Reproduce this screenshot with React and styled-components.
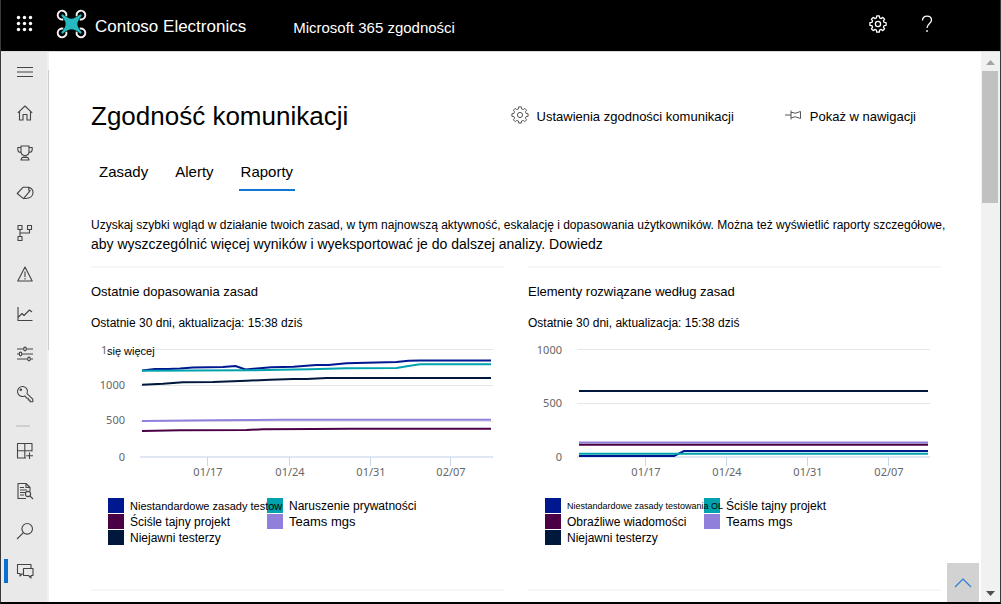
import React from "react";
import styled, { createGlobalStyle } from "styled-components";

const GlobalStyle = createGlobalStyle`
  *, *::before, *::after { box-sizing: border-box; }
  body {
    margin: 0;
    background: #fff;
    color: #000;
    font-family: "Liberation Sans", Arial, sans-serif;
    font-size: 13px;
  }
  button { font: inherit; color: inherit; background: none; border: 0; padding: 0; cursor: pointer; }
  ul { list-style: none; margin: 0; padding: 0; }
  h1, h2, p { margin: 0; font-weight: 400; }
  svg { display: block; }
`;

const Frame = styled.div`
  display: flex;
  flex-direction: column;
  height: 100vh;
  overflow: hidden;
  border: 1px solid #3a3a3a;
  border-top: 0;
  border-bottom: 2px solid #000;
`;

const TopBar = styled.header`
  display: flex;
  align-items: center;
  flex: none;
  height: 52px;
  padding: 0 64px 3px 15px;
  background: #000;
  color: #fff;
  border-bottom: 1px solid #dcdcdc;
`;

const Brand = styled.span`
  margin-left: 8px;
  font-size: 17px;
  line-height: 20px;
  padding-top: 6px;
`;

const Product = styled.span`
  flex: 1;
  margin-left: 47px;
  font-size: 15px;
  line-height: 20px;
  padding-top: 8px;
`;

const BarButton = styled.button`
  display: grid;
  place-items: center;
  width: 18px;
  height: 30px;
  margin-left: ${(p) => p.$gap || 0}px;
`;

const LogoBox = styled.span`
  margin-left: 22px;
`;

const Body = styled.div`
  display: flex;
  flex: 1;
  min-height: 0;
`;

const Rail = styled.nav`
  display: flex;
  flex-direction: column;
  flex: none;
  width: 46px;
  background: #e9e9e9;
`;

const RailButton = styled.button`
  display: flex;
  align-items: center;
  width: 100%;
  height: ${(p) => (p.$tall ? 41 : 40)}px;
  padding-left: ${(p) => (p.$active ? 11 : 15)}px;
  color: #444;
  &::before {
    content: "";
    display: ${(p) => (p.$active ? "block" : "none")};
    width: 4px;
    height: 24px;
    margin: 0 8px 0 -8px;
    background: #0a6fd0;
  }
`;

const RailDivider = styled.hr`
  width: 14px;
  height: 2px;
  margin: 11px 0 4px 15px;
  border: 0;
  background: #cfcfcf;
`;

const RailTrack = styled.div`
  flex: none;
  width: 2px;
  padding-top: 18px;
  background: #f1f1f1;
`;

const RailThumb = styled.div`
  width: 1px;
  height: 280px;
  margin-left: 1px;
  background: #cccccc;
`;

const Main = styled.main`
  position: relative;
  flex: 1;
  min-width: 0;
  overflow: hidden;
  padding: 48px 16px 0 42px;
`;

const TitleRow = styled.div`
  display: flex;
  align-items: center;
  height: 32px;
  padding-right: 49px;
`;

const Title = styled.h1`
  flex: 1;
  font-size: 26px;
  line-height: 32px;
  white-space: nowrap;
`;

const Action = styled.button`
  display: flex;
  align-items: center;
  gap: 8px;
  margin-left: 50px;
  padding-top: 2px;
  font-size: 13px;
  line-height: 18px;
  white-space: nowrap;
  svg { margin-bottom: 5px; color: #555; }
`;

const Tabs = styled.div`
  display: flex;
  gap: 23px;
  margin-top: 30px;
  padding-left: 6px;
`;

const Tab = styled.button`
  padding: 0 2px 7px;
  font-size: 15px;
  line-height: 20px;
  border-bottom: 2px solid ${(p) => (p.$selected ? "#0f78d4" : "transparent")};
`;

const Intro = styled.p`
  margin-top: 25px;
  font-size: 12px;
  line-height: 19px;
  white-space: nowrap;
`;

const IntroRest = styled.span`
  display: block;
  font-size: 14px;
`;

const Cards = styled.div`
  display: grid;
  grid-template-columns: 1fr 1fr;
  column-gap: 24px;
  margin: 12px 24px 0 0;
`;

const Card = styled.section`
  min-width: 0;
  border-top: 2px solid #f6f6f6;
  padding: 15px 0 44px;
`;

const CardTitle = styled.h2`
  font-size: 13px;
  line-height: 18px;
`;

const CardNote = styled.p`
  margin-top: 14px;
  font-size: 12px;
  line-height: 16px;
`;

const Plot = styled.svg`
  width: 100%;
  height: auto;
  margin-top: 9px;
`;

const TickText = styled.text`
  font-family: "Noto Sans", "Open Sans", sans-serif;
  font-size: 11px;
  fill: #666;
`;

const OverText = styled.text`
  font-size: 11px;
  fill: #000;
`;

const Legend = styled.ul`
  display: grid;
  grid-template-columns: 159px 159px;
  margin-top: 12px;
  padding-left: 17px;
`;

const LegendItem = styled.li`
  display: flex;
  align-items: center;
  gap: 6px;
  height: 16px;
`;

const Swatch = styled.span`
  flex: none;
  width: 16px;
  height: 15px;
  background: ${(p) => p.$color};
`;

const LegendLabel = styled.span`
  position: relative;
  z-index: 1;
  flex: none;
  padding-top: 2px;
  font-size: ${(p) => p.$size || 12}px;
  line-height: 16px;
  white-space: nowrap;
`;

const ToTop = styled.button`
  position: absolute;
  right: 2px;
  bottom: 0;
  display: grid;
  place-items: center;
  width: 32px;
  height: 39px;
  background: #d2d2d2;
  color: #2b7cd3;
`;

const ScrollTrack = styled.div`
  display: flex;
  flex-direction: column;
  flex: none;
  width: 19px;
  padding: 1px 2px 0 1px;
  background: #f1f1f1;
`;

const ScrollArrow = styled.button`
  display: grid;
  place-items: center;
  height: 18px;
  color: ${(p) => p.$color};
`;

const ScrollThumb = styled.div`
  height: 132px;
  margin-bottom: auto;
  background: #c1c1c1;
`;

const gearPath = (c, inner, outer) => {
  const teeth = 8;
  const step = (Math.PI * 2) / teeth;
  const pts = [];
  for (let i = 0; i < teeth; i += 1) {
    [[-0.32, inner], [-0.2, outer], [0.2, outer], [0.32, inner]].forEach(([f, r]) => {
      const a = (i + f) * step;
      pts.push(`${(c + r * Math.sin(a)).toFixed(2)} ${(c - r * Math.cos(a)).toFixed(2)}`);
    });
  }
  return `M${pts.join("L")}Z`;
};

const Icon = ({ size = 18, width = 1.1, children }) => (
  <svg width={size} height={size} viewBox="0 0 18 18" fill="none" stroke="currentColor"
    strokeWidth={width} strokeLinejoin="round" aria-hidden="true">
    {children}
  </svg>
);

const Gear = ({ width }) => (
  <Icon width={width}>
    <path d={gearPath(9, 6.3, 8.2)} />
    <circle cx="9" cy="9" r="2.6" />
  </Icon>
);

const Waffle = () => (
  <svg width="18" height="18" viewBox="0 0 18 18" fill="#fff" aria-hidden="true">
    {[2.5, 8.5, 14.5].map((y) => [2.5, 8.5, 14.5].map((x) => (
      <circle key={`${x}-${y}`} cx={x} cy={y} r="1.7" />
    )))}
  </svg>
);

const rotor = "M10.300 7.300A4.400 4.400 0 1 0 7.300 10.300";

const Logo = () => (
  <svg width="31" height="30" viewBox="0 0 31 30" fill="none" aria-hidden="true">
    <g stroke="#f4f4f4" strokeWidth="1.900">
      <path d={rotor} />
      <path d={rotor} transform="translate(31 0) scale(-1 1)" />
      <path d={rotor} transform="translate(0 30) scale(1 -1)" />
      <path d={rotor} transform="translate(31 30) scale(-1 -1)" />
    </g>
    <path d="M6.500 6C9.500 8.500 12.500 10.300 15.500 10.300S21.500 8.500 24.500 6L25 6.500C22.300 9.500 20.700 12 20.700 15S22.300 20.500 25 23.500L24.500 24C21.500 21.500 18.500 19.700 15.500 19.700S9.500 21.500 6.500 24L6 23.500C8.700 20.500 10.300 18 10.300 15S8.700 9.500 6 6.500Z"
      fill="#27b9c0" stroke="#27b9c0" strokeWidth="1.300" strokeLinejoin="round" />
  </svg>
);

const railTop = [
  ["Menu", <path d="M1 4.500H17M1 9H17M1 13.500H17" />],
  ["Strona główna", <path d="M1.800 8.800L9 2L16.200 8.800M3.500 7.500V16H7V10.500H11V16H14.500V7.500" />],
  ["Wynik", <path d="M5 2H13V7.500C13 10 11.500 11.500 9 11.500S5 10 5 7.500ZM5 3.500H1.800V5.500C1.800 7.500 3 8.500 5.300 8.500M13 3.500H16.200V5.500C16.200 7.500 15 8.500 12.700 8.500M8 11.500V13.500M10 11.500V13.500M6 13.500H12L13 16H5Z" />],
  ["Etykiety", <path d="M1.200 9.500L7.200 3.200H12.500L13.200 7.800L7.500 14.600ZM12.500 3.200C15.500 4 17 6 17 8.500C17 12 14 14.500 9.500 14.500H7.500M13.200 7.800L14.500 6" />],
  ["Przepływ", <path d="M2 1.500H6V5.500H2ZM11.500 1.500H15.500V5.500H11.500ZM2 12.500H6V16.500H2ZM4 5.500V12.500M4 9H13.500V5.500" />],
  ["Ostrzeżenia", <path d="M9 2L16.200 16H1.800ZM9 6.500V12M9 13V14.500" />],
  ["Trendy", <path d="M2 2V15.500H16.500M2.500 12L6 8.500L8 10.500L13.500 5L16 7" />],
  ["Ustawienia", <g><path d="M1 4H7.700M10.300 4H17M1 9H3.200M5.800 9H17M1 14H11.700M14.300 14H17" /><ellipse cx="9" cy="4" rx="1.300" ry="1.900" /><ellipse cx="4.500" cy="9" rx="1.300" ry="1.900" /><ellipse cx="13" cy="14" rx="1.300" ry="1.900" /></g>],
  ["Uprawnienia", <g><path d="M8.800 10.900A5 5 0 1 1 11 8.600L16.800 14.200V16.800H14V15H12.300V13.200H10.800Z" /><circle cx="4.800" cy="4.800" r="0.700" fill="currentColor" /></g>],
];

const railBottom = [
  ["Katalog", <path d="M16 9.500V1.500H1.500V16H10M8.800 1.500V16M1.500 8.800H16M13.500 10.500V17M10.200 13.800H17" />],
  ["Inspekcja", <g><path d="M10 16.500H2V1.500H10L14 5.500V9M10 1.500V5.500H14M4 5.500H8M4 8H11M4 10.500H9M4 13H8" /><circle cx="12" cy="12" r="2.600" /><path d="M14 14L17 17" /></g>],
  ["Wyszukiwanie", <g><circle cx="11.200" cy="6.800" r="5.300" /><path d="M7.400 10.600L1 17" /></g>],
  ["Komunikacja", <path d="M6.500 11.500L4 14V11.500H1.500V2.500H15V6.500M7.500 6.500H17V13.500H15V16L12.500 13.500H7.500Z" />],
];

const C = { navy: "#00188f", teal: "#00a3ad", dark: "#00183c", purple: "#9080dc", maroon: "#4b0045" };

const charts = [
  {
    title: "Ostatnie dopasowania zasad",
    grid: [9, 45, 81],
    ticks: [["1000", 45], ["500", 80], ["0", 117]],
    over: true,
    xs: [116, 198, 279, 359],
    lines: [
      [C.navy, "51,30.500 64,29 77,29 89,28.500 102,27.500 132,27 144.500,26 154.500,29.500 165.500,28.500 180.500,27.300 202.500,26.700 215.500,25.700 225.500,25 237.500,25 255.500,23.300 305.500,22 317.500,20.700 329,20.500 400,20.500"],
      [C.teal, "51,30.700 155.500,30.300 189,29.700 219,29.300 255.500,28.300 305.500,28 317.500,26 329,24.300 400,24.300"],
      [C.dark, "51,44.700 72,43.700 92,42.300 122,42 155.500,40.700 179,39.700 202,39 215.500,39 235.500,38 400,38"],
      [C.purple, "51,81 122,80.300 189,79.700 400,79.700"],
      [C.maroon, "51,91 89,90.300 155.500,90 172,89.300 222,89 259,88.700 400,88.700"],
    ],
    legend: [
      [C.navy, "Niestandardowe zasady testow", 11],
      [C.teal, "Naruszenie prywatności", 12],
      [C.maroon, "Ściśle tajny projekt", 12],
      [C.purple, "Teams mgs", 13],
      [C.dark, "Niejawni testerzy", 12],
    ],
  },
  {
    title: "Elementy rozwiązane według zasad",
    grid: [9, 63],
    ticks: [["1000", 10], ["500", 63], ["0", 117]],
    xs: [117, 198, 279, 360],
    lines: [
      [C.dark, "51,51 400,51"],
      [C.purple, "51,102.500 400,102.500"],
      [C.maroon, "51,104.700 400,104.700"],
      [C.navy, "51,116 146,116 156,111 400,111"],
      [C.teal, "51,113.700 400,113.700"],
    ],
    legend: [
      [C.navy, "Niestandardowe zasady testowania OL", 9],
      [C.teal, "Ściśle tajny projekt", 12],
      [C.maroon, "Obraźliwe wiadomości", 12],
      [C.purple, "Teams mgs", 13],
      [C.dark, "Niejawni testerzy", 12],
    ],
  },
];

const dates = ["01/17", "01/24", "01/31", "02/07"];

const ReportCard = ({ chart }) => (
  <Card>
    <CardTitle>{chart.title}</CardTitle>
    <CardNote>Ostatnie 30 dni, aktualizacja: 15:38 dziś</CardNote>
    <Plot viewBox="0 0 413 145" role="img" aria-label={chart.title}>
      {chart.grid.map((y) => (
        <path key={y} d={`M49 ${y + 0.5}H402`} stroke="#e6e6e6" />
      ))}
      <path d="M49 117H402" stroke="#d5def0" strokeWidth="1.600" />
      {chart.xs.map((x, i) => (
        <g key={x}>
          <path d={`M${x + 0.5} 117V126`} stroke="#ccd6eb" />
          <TickText x={x + 1} y="136" textAnchor="middle">{dates[i]}</TickText>
        </g>
      ))}
      {chart.ticks.map(([label, y]) => (
        <TickText key={label} x="34" y={y + 4} textAnchor="end">{label}</TickText>
      ))}
      {chart.lines.map(([color, points]) => (
        <polyline key={color} points={points} fill="none" stroke={color} strokeWidth="2" />
      ))}
      {chart.over && (
        <>
          <TickText x="10" y="14">1</TickText>
          <OverText x="16" y="15">się więcej</OverText>
        </>
      )}
    </Plot>
    <Legend>
      {chart.legend.map(([color, label, size]) => (
        <LegendItem key={color}>
          <Swatch $color={color} />
          <LegendLabel $size={size}>{label}</LegendLabel>
        </LegendItem>
      ))}
    </Legend>
  </Card>
);

export default function App() {
  return (
    <>
      <GlobalStyle />
      <Frame>
        <TopBar>
          <BarButton aria-label="Aplikacje"><Waffle /></BarButton>
          <LogoBox><Logo /></LogoBox>
          <Brand>Contoso Electronics</Brand>
          <Product>Microsoft 365 zgodności</Product>
          <BarButton aria-label="Ustawienia"><Gear width={1.3} /></BarButton>
          <BarButton $gap={31} aria-label="Pomoc">
            <Icon width={1.3}>
              <path d="M4.500 5.500C4.500 2.800 6.300 1.200 9 1.200S13.500 2.900 13.500 5.200C13.500 8.300 9 8.800 9 13M9 15V17" />
            </Icon>
          </BarButton>
        </TopBar>
        <Body>
          <Rail aria-label="Nawigacja">
            {railTop.map(([label, art], i) => (
              <RailButton key={label} aria-label={label} $tall={i === 1 || i === 5}>
                <Icon>{art}</Icon>
              </RailButton>
            ))}
            <RailDivider />
            {railBottom.map(([label, art], i) => (
              <RailButton key={label} aria-label={label} $active={i === 3}>
                <Icon>{art}</Icon>
              </RailButton>
            ))}
          </Rail>
          <RailTrack><RailThumb /></RailTrack>
          <Main>
            <TitleRow>
              <Title>Zgodność komunikacji</Title>
              <Action><Gear width={1} />Ustawienia zgodności komunikacji</Action>
              <Action>
                <Icon width={1}>
                  <path d="M1 9H7M7 4.500V13.500M7 6.500H9L11 7.300L16.500 5.500V12.500L11 10.700L9 11.500H7" />
                </Icon>
                Pokaż w nawigacji
              </Action>
            </TitleRow>
            <Tabs role="tablist">
              <Tab role="tab">Zasady</Tab>
              <Tab role="tab">Alerty</Tab>
              <Tab role="tab" aria-selected="true" $selected>Raporty</Tab>
            </Tabs>
            <Intro>
              Uzyskaj szybki wgląd w działanie twoich zasad, w tym najnowszą aktywność, eskalację i dopasowania użytkowników. Można też wyświetlić raporty szczegółowe,
              <IntroRest>aby wyszczególnić więcej wyników i wyeksportować je do dalszej analizy. Dowiedz</IntroRest>
            </Intro>
            <Cards>
              {charts.map((chart) => <ReportCard key={chart.title} chart={chart} />)}
              <Card />
              <Card />
            </Cards>
            <ToTop aria-label="Do góry">
              <Icon><path d="M1 13L9 5L17 13" /></Icon>
            </ToTop>
          </Main>
          <ScrollTrack>
            <ScrollArrow $color="#a3a3a3" aria-label="W górę">
              <svg width="9" height="5" viewBox="0 0 9 5" fill="currentColor"><path d="M0 5L4.500 0L9 5Z" /></svg>
            </ScrollArrow>
            <ScrollThumb />
            <ScrollArrow $color="#505050" aria-label="W dół">
              <svg width="9" height="5" viewBox="0 0 9 5" fill="currentColor"><path d="M0 0L4.500 5L9 0Z" /></svg>
            </ScrollArrow>
          </ScrollTrack>
        </Body>
      </Frame>
    </>
  );
}
